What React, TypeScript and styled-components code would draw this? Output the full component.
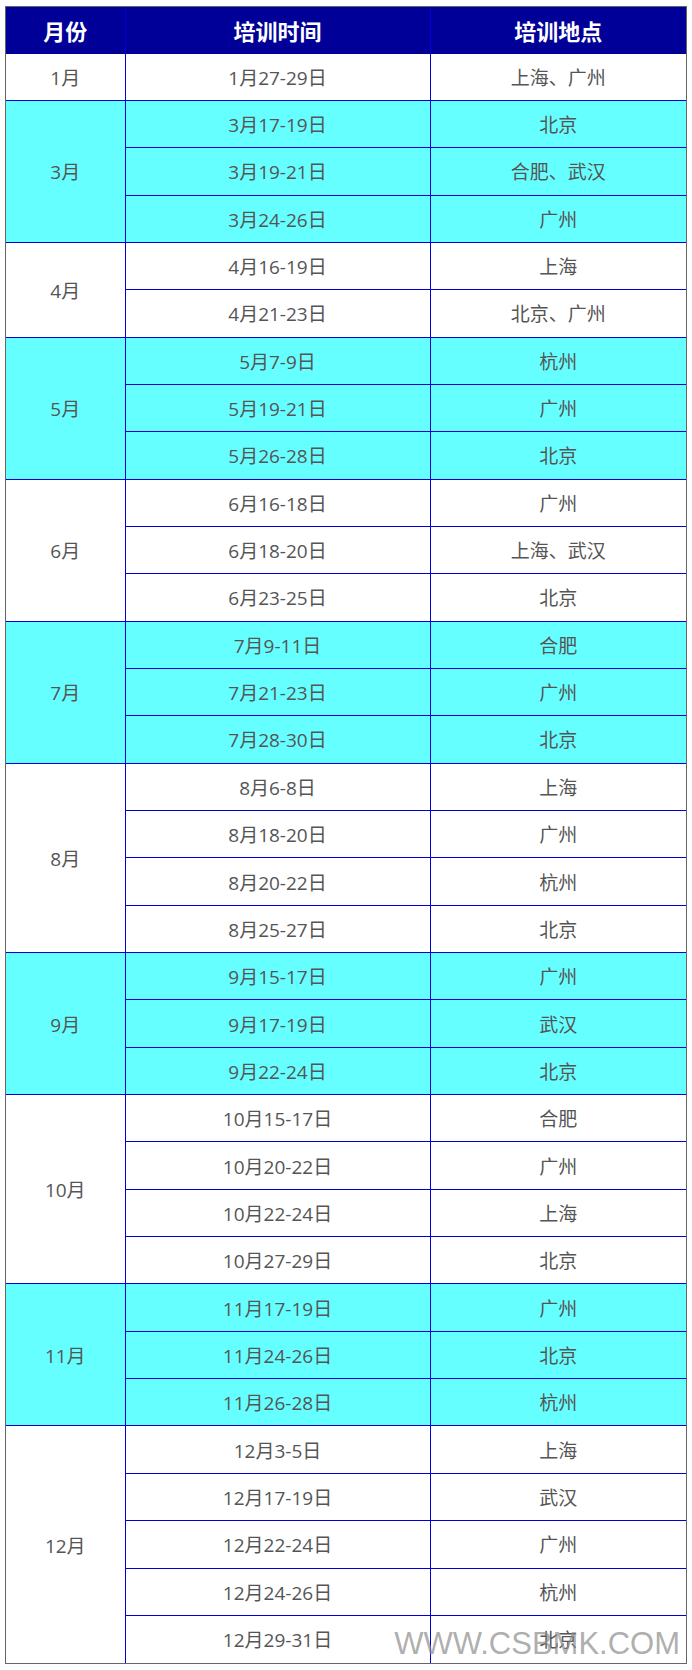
import styled, { createGlobalStyle } from 'styled-components';

const GlobalStyle = createGlobalStyle`
  body {
    margin: 0;
    background: #ffffff;
    font-family: 'Open Sans', 'Noto Sans CJK SC', sans-serif;
  }
`;

const Frame = styled.div`
  position: relative;
  margin: 6px 5px 0 5px;
  border: 1px solid #666666;
`;

const Table = styled.table`
  width: 100%;
  border-collapse: collapse;
  border-style: hidden;
  table-layout: fixed;
`;

const HeadRow = styled.tr`
  height: 46px;
  background: #000099;
`;

const HeadCell = styled.th`
  padding: 0;
  border: 1px solid #0000dd;
  border-bottom-color: #000099;
  color: #ffffff;
  font-family: 'Noto Sans CJK SC', sans-serif;
  font-size: 22px;
  font-weight: 700;
  text-align: center;
  vertical-align: middle;
`;

const Row = styled.tr<{ $cyan: boolean }>`
  height: 47.35px;
  background: ${(p) => (p.$cyan ? '#66ffff' : '#ffffff')};
`;

const Cell = styled.td`
  padding: 0;
  border: 1px solid #0000dd;
  color: #555555;
  font-size: 19px;
  text-align: center;
  vertical-align: middle;
`;

const Watermark = styled.div`
  position: absolute;
  right: 6px;
  bottom: 4px;
  font-family: 'Liberation Sans', Arial, sans-serif;
  font-size: 31px;
  line-height: 1;
  color: rgba(140, 140, 140, 0.7);
  pointer-events: none;
`;

const schedule: { month: string; items: [string, string][] }[] = [
  { month: '1月', items: [['1月27-29日', '上海、广州']] },
  {
    month: '3月',
    items: [
      ['3月17-19日', '北京'],
      ['3月19-21日', '合肥、武汉'],
      ['3月24-26日', '广州'],
    ],
  },
  {
    month: '4月',
    items: [
      ['4月16-19日', '上海'],
      ['4月21-23日', '北京、广州'],
    ],
  },
  {
    month: '5月',
    items: [
      ['5月7-9日', '杭州'],
      ['5月19-21日', '广州'],
      ['5月26-28日', '北京'],
    ],
  },
  {
    month: '6月',
    items: [
      ['6月16-18日', '广州'],
      ['6月18-20日', '上海、武汉'],
      ['6月23-25日', '北京'],
    ],
  },
  {
    month: '7月',
    items: [
      ['7月9-11日', '合肥'],
      ['7月21-23日', '广州'],
      ['7月28-30日', '北京'],
    ],
  },
  {
    month: '8月',
    items: [
      ['8月6-8日', '上海'],
      ['8月18-20日', '广州'],
      ['8月20-22日', '杭州'],
      ['8月25-27日', '北京'],
    ],
  },
  {
    month: '9月',
    items: [
      ['9月15-17日', '广州'],
      ['9月17-19日', '武汉'],
      ['9月22-24日', '北京'],
    ],
  },
  {
    month: '10月',
    items: [
      ['10月15-17日', '合肥'],
      ['10月20-22日', '广州'],
      ['10月22-24日', '上海'],
      ['10月27-29日', '北京'],
    ],
  },
  {
    month: '11月',
    items: [
      ['11月17-19日', '广州'],
      ['11月24-26日', '北京'],
      ['11月26-28日', '杭州'],
    ],
  },
  {
    month: '12月',
    items: [
      ['12月3-5日', '上海'],
      ['12月17-19日', '武汉'],
      ['12月22-24日', '广州'],
      ['12月24-26日', '杭州'],
      ['12月29-31日', '北京'],
    ],
  },
];

export default function App() {
  return (
    <>
      <GlobalStyle />
      <Frame>
        <Table>
          <colgroup>
            <col style={{ width: 119 }} />
            <col style={{ width: 305 }} />
            <col style={{ width: 256 }} />
          </colgroup>
          <thead>
            <HeadRow>
              <HeadCell>月份</HeadCell>
              <HeadCell>培训时间</HeadCell>
              <HeadCell>培训地点</HeadCell>
            </HeadRow>
          </thead>
          <tbody>
            {schedule.map((group, gi) =>
              group.items.map(([date, place], i) => (
                <Row key={date} $cyan={gi % 2 === 1}>
                  {i === 0 ? (
                    <Cell rowSpan={group.items.length}>{group.month}</Cell>
                  ) : null}
                  <Cell>{date}</Cell>
                  <Cell>{place}</Cell>
                </Row>
              )),
            )}
          </tbody>
        </Table>
        <Watermark>WWW.CSBMK.COM</Watermark>
      </Frame>
    </>
  );
}
